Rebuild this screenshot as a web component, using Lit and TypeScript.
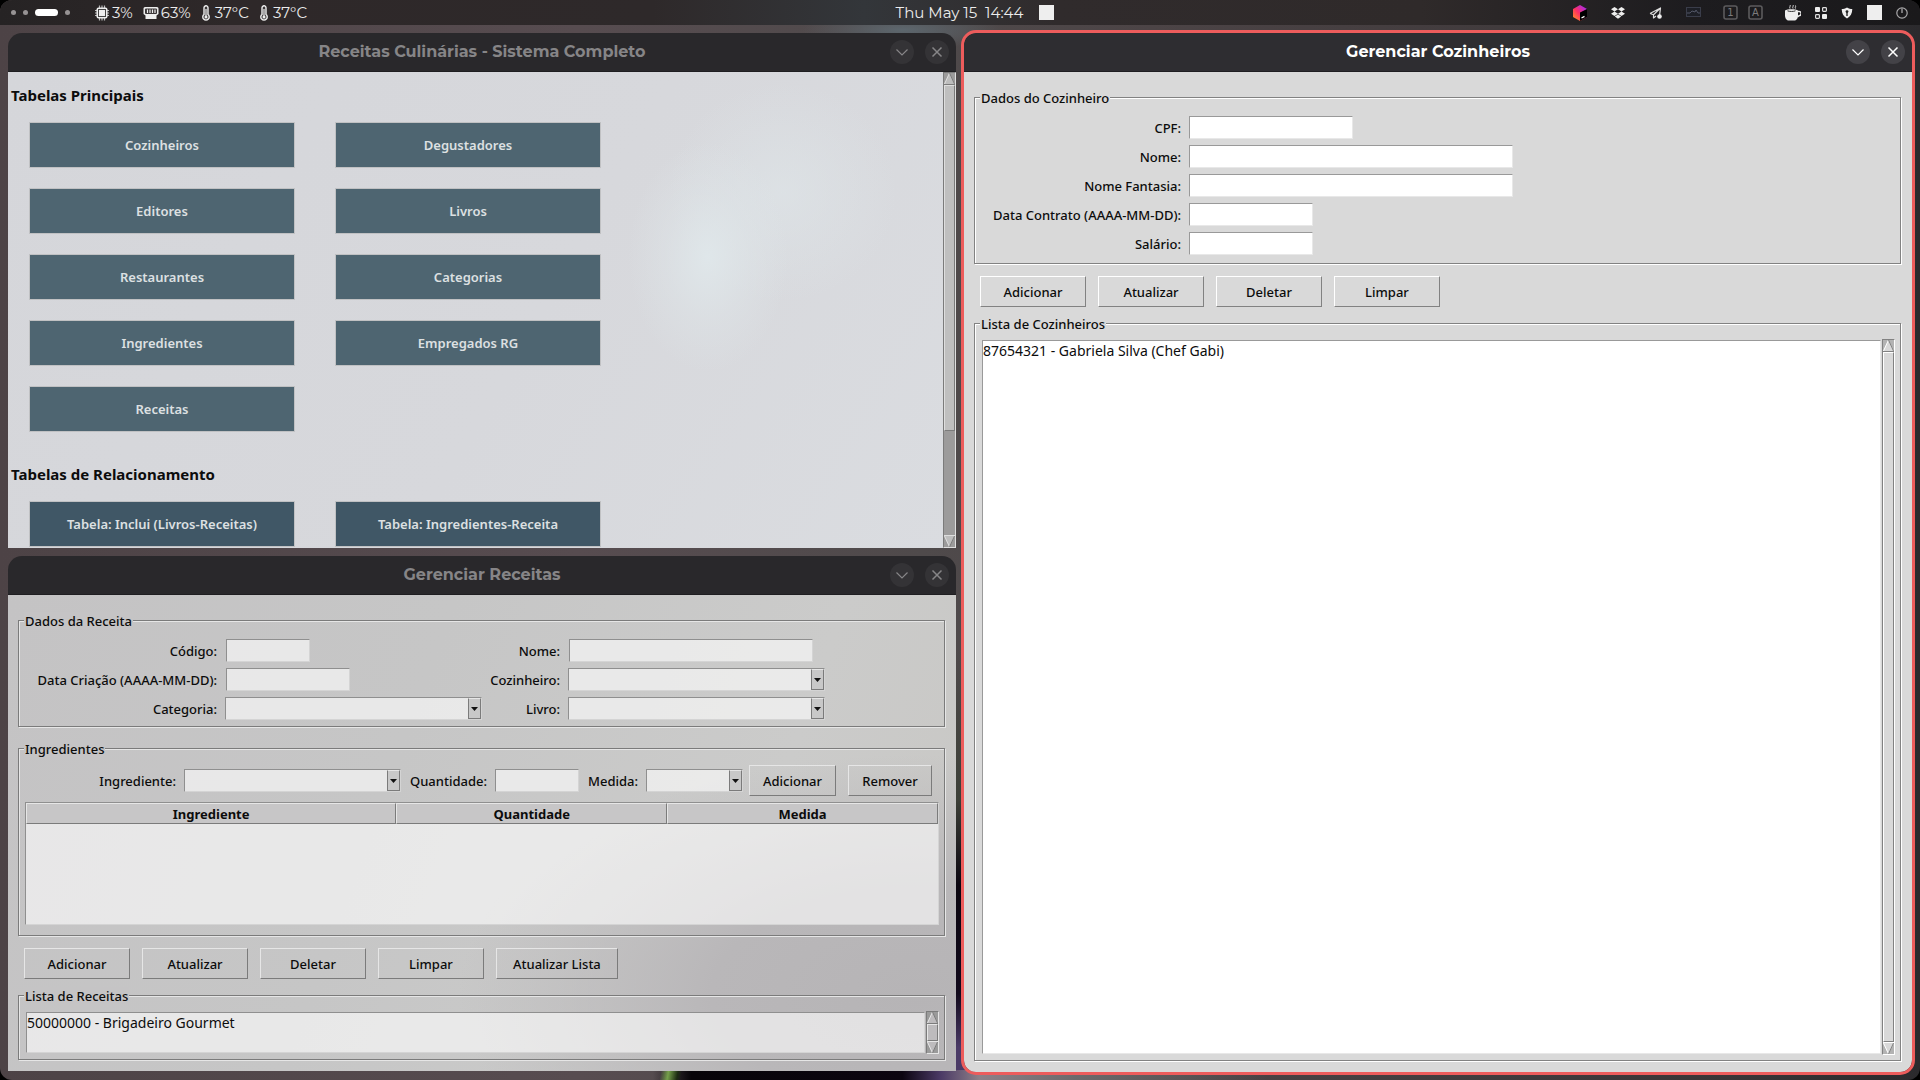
import { LitElement, html, css, svg } from "lit";
import { customElement } from "lit/decorators.js";
import { classMap } from "lit/directives/class-map.js";
import { styleMap } from "lit/directives/style-map.js";

const MAIN_TABLES = [
  "Cozinheiros", "Degustadores",
  "Editores", "Livros",
  "Restaurantes", "Categorias",
  "Ingredientes", "Empregados RG",
  "Receitas",
];

const LINK_TABLES = ["Tabela: Inclui (Livros-Receitas)", "Tabela: Ingredientes-Receita"];

const chevron = svg`<path d="M6.500 9.500l5.500 5.500 5.500-5.500" fill="none" stroke="currentColor" stroke-width="1.200"/>`;
const cross = svg`<path d="M7.500 7.500l9 9M16.500 7.500l-9 9" fill="none" stroke="currentColor" stroke-width="1.500"/>`;

@customElement("app-root")
export class AppRoot extends LitElement {
  static styles = css`
    :host {
      display: flex;
      flex-direction: column;
      height: 100vh;
      overflow: hidden;
      background: #000;
      font: 500 13px/18px "Noto Sans", "Open Sans", sans-serif;
      color: #0c0c0c;
      --face: #d9d9d9;
      --dark: #828282;
      --light: #ffffff;
      --field: #ffffff;
      --field-edge: #999999;
      --field-glow: #e8e8e8;
      --trough: #b3b3b3;
    }
    * { box-sizing: border-box; }
    button, input, select { font: inherit; color: inherit; margin: 0; border-radius: 0; outline: none; }

    .screen {
      flex: 1;
      min-height: 0;
      display: flex;
      flex-direction: column;
      overflow: hidden;
      border-radius: 12px;
      background:
        linear-gradient(100deg, transparent 34.400%, #75a04a 34.800%, #1c2a12 35.300%, transparent 35.500%) bottom / 100% 10px no-repeat,
        linear-gradient(90deg, transparent 34%, #070409 36%, #0c0510 47%, #4b3a66 49%, #8d8088 51%, #6d6a6c 56%, transparent 66%) bottom / 100% 10px no-repeat,
        linear-gradient(180deg, transparent 60%, #3d4038 74%, #0b0610 82%, #120a1c 92%, #4a3a66 97%) 50% 0 / 9px 100% no-repeat,
        radial-gradient(100px 20px at 47% 30px, #5d676e, transparent),
        linear-gradient(90deg, #4d4346 0, #574c50 30%, #4f4a4b 48%, #4c4446 60%, #3a3537 90%, #2b2a2d 100%);
    }

    /* status bar */
    .bar {
      display: grid;
      grid-template-columns: 1fr auto 1fr;
      align-items: center;
      height: 25px;
      flex: none;
      padding: 0 12px 0 11px;
      color: #ececec;
      font: 15px/18px Montserrat, Inter, sans-serif;
      background: linear-gradient(90deg, #262324 0, #2e2829 12%, #2e292a 34%, #33363a 45%, #302b2c 55%, #2f2a2a 74%, #1d1c1f 88%, #1a191b 100%);
    }
    .bar-side { display: flex; align-items: center; }
    .bar-end { justify-content: flex-end; }
    .spaces { display: flex; align-items: center; gap: 7px; margin-right: 24px; }
    .space { width: 5px; height: 5px; padding: 0; border: 0; border-radius: 5px; background: #979394; }
    .space.current { width: 23px; height: 7px; background: #fff; }
    .stat { display: flex; align-items: center; gap: 2px; margin-right: 10px; }
    .stat.temp { gap: 5px; margin-left: 1px; }
    .clock { display: flex; align-items: center; gap: 16px; padding-left: 31px; }
    .clock-text { white-space: pre; }
    .block { width: 15px; height: 15px; background: #eeeeee; }
    .icon { display: block; flex: none; }
    .tray-gap-l { margin-right: 22px; }
    .tray-gap-m { margin-right: 14px; }
    .tray-gap-s { margin-right: 10px; }
    .tray-lead { margin-left: 12px; }

    /* desktop */
    .desktop {
      flex: 1;
      min-height: 0;
      display: grid;
      grid-template-columns: 1fr 1fr;
      gap: 8px;
      padding: 8px;
    }
    .stack { display: grid; grid-template-rows: 1fr 1fr; gap: 8px; padding-bottom: 1px; min-height: 0; }
    .win { display: flex; flex-direction: column; min-height: 0; min-width: 0; overflow: hidden; border-radius: 14px 14px 0 0; }
    .win.active { border-radius: 12px; outline: 3px solid #ed5c5c; }
    .titlebar {
      display: grid;
      grid-template-columns: 1fr auto 1fr;
      align-items: center;
      height: 39px;
      flex: none;
      padding: 0 7px;
      border-bottom: 1px solid #1f1e21;
      background: #29282b;
      color: #868587;
    }
    .active .titlebar { background: #2e2d31; color: #fff; }
    .title { grid-column: 2; margin: 0; font: 700 16px/20px Montserrat, Inter, sans-serif; }
    .title-actions { display: flex; justify-content: flex-end; gap: 11px; }
    .round { width: 24px; height: 24px; padding: 0; border: 0; border-radius: 12px; background: #343336; color: #868587; }
    .active .round { background: #434247; color: #fff; }
    .round svg { display: block; }

    /* launcher */
    .launcher {
      --face: #bdbdbd; --dark: #7b7b7b; --light: #dedede; --trough: #9c9b9b;
      flex: 1;
      min-height: 0;
      display: flex;
      background:
        radial-gradient(closest-side, rgba(224, 232, 235, 0.900) 0, rgba(223, 230, 233, 0.400) 55%, transparent) 620px 70px / 160px 230px no-repeat,
        radial-gradient(closest-side, rgba(223, 230, 233, 0.600), transparent) 660px 10px / 230px 220px no-repeat,
        linear-gradient(120deg, #d5d6da 0, #d7d8dc 55%, #dadce0 100%);
    }
    .launcher-body { flex: 1; min-width: 0; overflow: hidden; padding: 12px 3px 0; }
    .heading { margin: 0 0 16px; font-weight: 700; font-size: 15px; line-height: 22px; }
    .tiles { display: grid; grid-template-columns: 266px 266px; gap: 20px 40px; padding: 0 18px; margin-bottom: 31px; }
    .tile { height: 46px; padding: 0; border: 1px solid #c0c1c3; background: #4e6571; color: #dde0e2; font-weight: 600; }
    .tile.link { background: #405766; }

    /* forms */
    .form { flex: 1; min-height: 0; display: flex; flex-direction: column; padding: 17px 11px 11px 10px; background: var(--face); }
    .recipes {
      --dark: #7b7b7b; --light: #e6e6e6;
      --field: rgba(255, 255, 255, 0.600); --field-edge: #8f8f8f; --field-glow: #d4d4d4; --trough: #9a9a9a;
      background:
        radial-gradient(460px 240px at 96% 84%, #b6b4b6 0, #b9b7b9 45%, transparent 100%),
        linear-gradient(110deg, #c4c3c4 0, #c6c6c6 40%, #cbcbca 75%, #c8c7c4 100%);
    }
    .group {
      min-width: 0;
      margin: 0;
      padding: 10px 5px 8px 6px;
      border: 1px solid var(--dark);
      box-shadow: 1px 1px 0 var(--light), inset 1px 1px 0 var(--light);
    }
    .group legend { margin-left: -1px; padding: 2px 1px 0; line-height: 15px; background: var(--face); }
    .recipes .group legend { background: #c5c4c5; }
    .group.tight { padding-bottom: 6px; margin-bottom: 13px; }
    .group.items { padding-top: 8px; padding-bottom: 10px; }
    .group.list { padding-top: 7px; padding-bottom: 5px; flex: 1; min-height: 0; }
    .fields { display: grid; row-gap: 6px; align-items: center; }
    .fields.cook { grid-template-columns: 208px 1fr; }
    .fields.recipe { grid-template-columns: 200px 257px 86px 257px; }
    .fields.recipe .entry { margin-left: 1px; }
    .fields.item { grid-template-columns: 159px 217px 94px 84px 67px 97px auto 1fr; margin-bottom: 6px; }
    .label { padding: 2px 8px 0 0; text-align: right; white-space: nowrap; line-height: 21px; }
    .entry {
      display: block;
      height: 23px;
      padding: 0 3px;
      border: 1px solid;
      border-color: var(--field-edge) var(--field-glow) var(--field-glow) var(--field-edge);
      background: var(--field);
    }
    .w84 { width: 84px; }
    .w124 { width: 124px; }
    .w164 { width: 164px; }
    .w244 { width: 244px; }
    .w324 { width: 324px; }
    .combo { position: relative; display: block; height: 23px; }
    .combo select {
      appearance: none;
      display: block;
      width: 100%;
      height: 100%;
      padding: 0 16px 0 3px;
      border: 1px solid;
      border-color: var(--field-edge) var(--field-glow) var(--field-glow) var(--field-edge);
      background: var(--field);
    }
    .combo-arrow {
      position: absolute;
      top: 1px;
      right: 1px;
      bottom: 1px;
      width: 13px;
      display: grid;
      place-items: center;
      pointer-events: none;
      border: 1px solid;
      border-color: var(--light) var(--dark) var(--dark) var(--dark);
      background: #c8c8c8;
    }
    .btn {
      height: 31px;
      min-width: 106px;
      padding: 0 16px;
      border: 1px solid;
      border-color: var(--light) var(--dark) var(--dark) var(--light);
      background: transparent;
      white-space: nowrap;
    }
    .btn.small { min-width: 84px; padding: 0 13px; justify-self: start; margin-left: 6px; }
    .btn.small + .btn.small { margin-left: 12px; }
    .actions { display: flex; gap: 12px; padding: 0 6px; margin: 12px 0 8px; }

    .table-box {
      height: 123px;
      border: 1px solid;
      border-color: var(--field-edge) var(--field-glow) var(--field-glow) var(--field-edge);
      background: var(--field);
    }
    .table { width: 100%; border-collapse: separate; border-spacing: 0; table-layout: fixed; }
    .table th {
      height: 21px;
      padding: 0;
      font-weight: 700;
      line-height: 18px;
      border: 1px solid;
      border-color: var(--light) var(--dark) var(--dark) var(--light);
      background: #c7c6c7;
    }
    .first-col { width: 40.600%; }

    .list-row { display: flex; gap: 1px; height: 100%; min-height: 0; }
    .listbox {
      flex: 1;
      min-width: 0;
      margin: 1px 0 1px 1px;
      padding: 0;
      overflow: hidden;
      border: 1px solid;
      border-color: var(--field-edge) var(--field-glow) var(--field-glow) var(--field-edge);
      background: var(--field);
    }
    .listbox option { padding: 0; min-height: 20px; font-size: 14px; line-height: 20px; }

    .scroll {
      flex: none;
      width: 13px;
      display: flex;
      flex-direction: column;
      border: 1px solid;
      border-color: var(--dark) var(--light) var(--light) var(--dark);
      background: var(--trough);
    }
    .scroll svg { display: block; flex: none; }
    .scroll-track { flex: 1; min-height: 0; }
    .scroll-thumb { border: 1px solid; border-color: var(--light) var(--dark) var(--dark) var(--light); background: var(--face); }
    .launcher .scroll-thumb { background: #bfbfbf; }
    .recipes .scroll-thumb { background: #bdbbbd; }
    .tri-fill { fill: var(--face); }
    .recipes .tri-fill { fill: #bdbbbd; }
    .tri-dark { stroke: var(--dark); fill: none; }
    .tri-light { stroke: var(--light); fill: none; }
  `;

  private scrollbar(ratio: number) {
    return html`<div class="scroll">
      <svg width="11" height="12" viewBox="0 0 11 12">
        <path class="tri-fill" d="M5.500 0L11 11H0z" />
        <path class="tri-light" d="M5.500 0L.5 11" />
        <path class="tri-dark" d="M5.500 0l5 11M0 11.500h11" />
      </svg>
      <div class="scroll-track">
        <div class="scroll-thumb" style=${styleMap({ height: `${ratio * 100}%` })}></div>
      </div>
      <svg width="11" height="12" viewBox="0 0 11 12">
        <path class="tri-fill" d="M0 1h11L5.500 12z" />
        <path class="tri-light" d="M0 .5h11M.5 1l5 11" />
        <path class="tri-dark" d="M10.500 1l-5 11" />
      </svg>
    </div>`;
  }

  private titlebar(title: string) {
    return html`<header class="titlebar">
      <h1 class="title">${title}</h1>
      <div class="title-actions">
        <button class="round" aria-label="Minimizar"><svg width="24" height="24">${chevron}</svg></button>
        <button class="round" aria-label="Fechar"><svg width="24" height="24">${cross}</svg></button>
      </div>
    </header>`;
  }

  private entry(id: string, label: string, width: string) {
    return html`<label class="label" for=${id}>${label}</label>
      <input class="entry ${width}" id=${id} type="text" />`;
  }

  private combo(id: string, label: string) {
    return html`<label class="label" for=${id}>${label}</label>
      <span class="combo">
        <select id=${id}><option></option></select>
        <span class="combo-arrow"><svg class="icon" width="7" height="4"><path d="M0 0h7L3.500 4z" fill="#111" /></svg></span>
      </span>`;
  }

  private actions(names: string[]) {
    return html`<div class="actions">${names.map((n) => html`<button class="btn">${n}</button>`)}</div>`;
  }

  private list(legend: string, item: string) {
    return html`<fieldset class="group list">
      <legend>${legend}</legend>
      <div class="list-row">
        <select class="listbox" multiple aria-label=${legend}><option>${item}</option></select>
        ${this.scrollbar(1)}
      </div>
    </fieldset>`;
  }

  private tiles(names: string[], link: boolean) {
    return html`<div class="tiles">
      ${names.map((n) => html`<button class=${classMap({ tile: true, link })}>${n}</button>`)}
    </div>`;
  }

  private thermometer() {
    return html`<svg class="icon" width="8" height="16" viewBox="0 0 8 16">
      <path d="M4 .8a2 2 0 0 0-2 2v6.600a3.200 3.200 0 1 0 4 0V2.800a2 2 0 0 0-2-2z" fill="#3a3637" stroke="#eee" stroke-width="1.400" />
      <path d="M4 4v7" stroke="#eee" stroke-width="1.200" /><circle cx="4" cy="12" r="1.500" fill="#eee" />
    </svg>`;
  }

  private keyIcon(char: string) {
    return html`<svg class="icon tray-gap-s" width="15" height="15" viewBox="0 0 15 15">
      <rect x="1" y="1" width="13" height="13" rx="2" fill="none" stroke="#5c5b5d" stroke-width="1.600" />
      <text x="7.500" y="11" text-anchor="middle" font-family="DejaVu Sans, sans-serif" font-size="10" fill="#7c7b7d">${char}</text>
    </svg>`;
  }

  private statusBar() {
    return html`<nav class="bar" aria-label="Barra de status">
      <div class="bar-side">
        <div class="spaces">
          ${[0, 1, 2, 3].map((i) => html`<button class=${classMap({ space: true, current: i === 2 })} aria-label="Área ${i + 1}"></button>`)}
        </div>
        <span class="stat">
          <svg class="icon" width="16" height="16" viewBox="0 0 16 16">
            <path d="M5.500 .5v15M8 .5v15M10.500 .5v15M1 5.500h14M1 8h14M1 10.500h14" stroke="#bbb" stroke-width="1.200" />
            <rect x="2.500" y="2.500" width="11" height="11" rx="2" fill="#eee" />
            <rect x="4" y="4" width="8" height="8" fill="#444" /><rect x="5" y="5" width="6" height="6" fill="#eee" />
          </svg>3%</span>
        <span class="stat">
          <svg class="icon" width="16" height="14" viewBox="0 0 16 14">
            <path d="M2 1h12a1.500 1.500 0 0 1 1.500 1.500V8L13.500 9.500V13H2.500V9.500L.5 8V2.500A1.500 1.500 0 0 1 2 1z" fill="#eee" />
            <rect x="2" y="2.500" width="12" height="5.500" rx="1" fill="#3a3637" />
            <path d="M4.500 3.500v3.500M7 3.500v3.500M9.500 3.500v3.500M12 3.500v3.500" stroke="#eee" stroke-width="1.200" />
          </svg>63%</span>
        <span class="stat temp">${this.thermometer()}37°C</span>
        <span class="stat temp">${this.thermometer()}37°C</span>
      </div>
      <div class="clock"><time class="clock-text">Thu May 15  14:44</time><span class="block"></span></div>
      <div class="bar-side bar-end">
        <svg class="icon tray-gap-l" width="16" height="16" viewBox="0 0 16 16">
          <defs><linearGradient id="cube" x1="0" y1="1" x2="1" y2="0">
            <stop offset="0" stop-color="#ff9a1f" /><stop offset=".45" stop-color="#ff2f63" /><stop offset=".9" stop-color="#a32bf0" />
          </linearGradient></defs>
          <path d="M8 0l7 4v8l-7 4-7-4V4z" fill="url(#cube)" />
          <path d="M8 7.500l7-3.500v8l-7 4z" fill="#000" /><path d="M9.500 13l3-1.600" stroke="#fff" stroke-width="1.200" />
        </svg>
        <svg class="icon tray-gap-l" width="16" height="14" viewBox="0 0 16 14">
          <path d="M4.500 1L8 3.200 4.500 5.400 1 3.200zM11.500 1L15 3.200l-3.500 2.200L8 3.200zM4.500 5.500L8 7.700 4.500 9.900 1 7.700zM11.500 5.500L15 7.700l-3.500 2.200L8 7.700zM8 8.600l3.200 2L8 12.700l-3.200-2.100z" fill="#eee" />
        </svg>
        <svg class="icon tray-gap-l" width="16" height="14" viewBox="0 0 16 14">
          <path d="M2 7.500L12.500 2l-1 8M2 7.500l3.500 1.200L12.500 2M5.500 8.700V12L8 10" fill="none" stroke="#ddd" stroke-width="1.200" stroke-linejoin="round" />
          <circle cx="11.500" cy="10.500" r="2.300" fill="#eee" />
        </svg>
        <svg class="icon tray-gap-l" width="15" height="11" viewBox="0 0 15 11">
          <rect x=".5" y=".5" width="14" height="9" fill="#1d1f26" stroke="#3a3d4a" />
          <path d="M1 6h3l2-2 3 1 1-2 2 3h2" fill="none" stroke="#525666" />
        </svg>
        ${this.keyIcon("1")}
        ${this.keyIcon("A")}
        <svg class="icon tray-lead tray-gap-m" width="16" height="16" viewBox="0 0 16 16">
          <path d="M5 0c1 1-1 2 0 3.500M8 0c1 1-1 2 0 3.500M10.500.5c.8 1-.8 1.500 0 3" fill="none" stroke="#ddd" />
          <path d="M0 5.500c2-1.800 11-1.800 13 0v5c0 2.500-1.500 5-3.500 5h-6C1.500 15.500 0 13 0 10.500z" fill="#eee" />
          <path d="M2.500 5.800c2 .9 6 .9 8 0" stroke="#333" fill="none" />
          <path d="M13 6.500h1a1.700 1.700 0 0 1 0 4.200L12.500 12" fill="none" stroke="#eee" stroke-width="1.400" />
        </svg>
        <svg class="icon tray-gap-m" width="12" height="12" viewBox="0 0 12 12">
          <rect x="0" y="0" width="5" height="5" rx="1" fill="#eee" />
          <rect x="7.600" y=".6" width="3.800" height="3.800" rx=".8" fill="none" stroke="#ddd" stroke-width="1.200" />
          <rect x=".6" y="7.600" width="3.800" height="3.800" rx=".8" fill="none" stroke="#ddd" stroke-width="1.200" />
          <rect x="7" y="7" width="5" height="5" rx="1" fill="#eee" />
        </svg>
        <svg class="icon tray-gap-m" width="12" height="12" viewBox="0 0 12 12">
          <path d="M6 .5c2 1 3.500 1.500 5.300 1.500 0 4.500-1.800 7.500-5.300 9.500C2.500 9.500.7 6.500.7 2 2.500 2 4 1.500 6 .5z" fill="#eee" />
          <circle cx="6" cy="4.600" r="1.400" fill="#222" /><path d="M6 5v4" stroke="#222" stroke-width="1.400" />
        </svg>
        <span class="block tray-gap-m"></span>
        <svg class="icon" width="12" height="12" viewBox="0 0 12 12">
          <circle cx="6" cy="6" r="5.200" fill="none" stroke="#a9a8aa" stroke-width="1.200" />
          <path d="M6 1.500V6" stroke="#a9a8aa" stroke-width="1.300" />
        </svg>
      </div>
    </nav>`;
  }

  render() {
    return html`<div class="screen">
      ${this.statusBar()}
      <main class="desktop">
        <div class="stack">
          <section class="win">
            ${this.titlebar("Receitas Culinárias - Sistema Completo")}
            <div class="launcher">
              <div class="launcher-body">
                <h2 class="heading">Tabelas Principais</h2>
                ${this.tiles(MAIN_TABLES, false)}
                <h2 class="heading">Tabelas de Relacionamento</h2>
                ${this.tiles(LINK_TABLES, true)}
              </div>
              ${this.scrollbar(0.768)}
            </div>
          </section>
          <section class="win">
            ${this.titlebar("Gerenciar Receitas")}
            <div class="form recipes">
              <fieldset class="group tight">
                <legend>Dados da Receita</legend>
                <div class="fields recipe">
                  ${this.entry("codigo", "Código:", "w84")}
                  ${this.entry("nome-receita", "Nome:", "w244")}
                  ${this.entry("data-criacao", "Data Criação (AAAA-MM-DD):", "w124")}
                  ${this.combo("cozinheiro", "Cozinheiro:")}
                  ${this.combo("categoria", "Categoria:")}
                  ${this.combo("livro", "Livro:")}
                </div>
              </fieldset>
              <fieldset class="group items">
                <legend>Ingredientes</legend>
                <div class="fields item">
                  ${this.combo("ingrediente", "Ingrediente:")}
                  ${this.entry("quantidade", "Quantidade:", "w84")}
                  ${this.combo("medida", "Medida:")}
                  <button class="btn small">Adicionar</button>
                  <button class="btn small">Remover</button>
                </div>
                <div class="table-box">
                  <table class="table">
                    <colgroup><col class="first-col" /><col /><col /></colgroup>
                    <thead><tr><th scope="col">Ingrediente</th><th scope="col">Quantidade</th><th scope="col">Medida</th></tr></thead>
                  </table>
                </div>
              </fieldset>
              ${this.actions(["Adicionar", "Atualizar", "Deletar", "Limpar", "Atualizar Lista"])}
              ${this.list("Lista de Receitas", "50000000 - Brigadeiro Gourmet")}
            </div>
          </section>
        </div>
        <section class="win active">
          ${this.titlebar("Gerenciar Cozinheiros")}
          <div class="form">
            <fieldset class="group">
              <legend>Dados do Cozinheiro</legend>
              <div class="fields cook">
                ${this.entry("cpf", "CPF:", "w164")}
                ${this.entry("nome", "Nome:", "w324")}
                ${this.entry("nome-fantasia", "Nome Fantasia:", "w324")}
                ${this.entry("data-contrato", "Data Contrato (AAAA-MM-DD):", "w124")}
                ${this.entry("salario", "Salário:", "w124")}
              </div>
            </fieldset>
            ${this.actions(["Adicionar", "Atualizar", "Deletar", "Limpar"])}
            ${this.list("Lista de Cozinheiros", "87654321 - Gabriela Silva (Chef Gabi)")}
          </div>
        </section>
      </main>
    </div>`;
  }
}
